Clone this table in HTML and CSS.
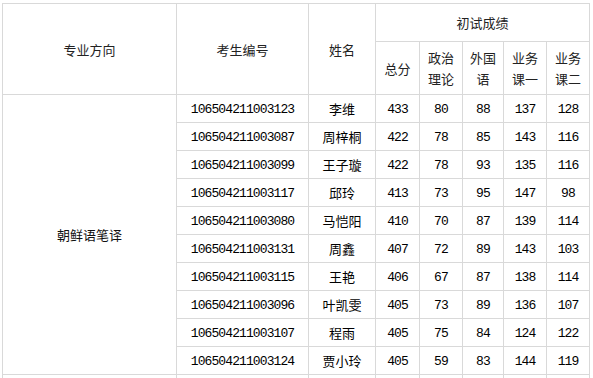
FILE: index.html
```html
<!DOCTYPE html>
<html lang="zh-CN">
<head>
<meta charset="utf-8">
<link rel="stylesheet" href="styles.css">
</head>
<body>
<div class="sheet">
  <div class="cell head span-r2">专业方向</div>
  <div class="cell head span-r2">考生编号</div>
  <div class="cell head span-r2">姓名</div>
  <div class="cell head span-c5">初试成绩</div>
  <div class="cell head">总分</div>
  <div class="cell head two">政治<br>理论</div>
  <div class="cell head two">外国<br>语</div>
  <div class="cell head two">业务<br>课一</div>
  <div class="cell head two">业务<br>课二</div>

  <div class="cell major span-r10">朝鲜语笔译</div>
  <div class="cell num">106504211003123</div><div class="cell name">李维</div><div class="cell num">433</div><div class="cell num">80</div><div class="cell num">88</div><div class="cell num">137</div><div class="cell num">128</div>
  <div class="cell num">106504211003087</div><div class="cell name">周梓桐</div><div class="cell num">422</div><div class="cell num">78</div><div class="cell num">85</div><div class="cell num">143</div><div class="cell num">116</div>
  <div class="cell num">106504211003099</div><div class="cell name">王子璇</div><div class="cell num">422</div><div class="cell num">78</div><div class="cell num">93</div><div class="cell num">135</div><div class="cell num">116</div>
  <div class="cell num">106504211003117</div><div class="cell name">邱玲</div><div class="cell num">413</div><div class="cell num">73</div><div class="cell num">95</div><div class="cell num">147</div><div class="cell num">98</div>
  <div class="cell num">106504211003080</div><div class="cell name">马恺阳</div><div class="cell num">410</div><div class="cell num">70</div><div class="cell num">87</div><div class="cell num">139</div><div class="cell num">114</div>
  <div class="cell num">106504211003131</div><div class="cell name">周鑫</div><div class="cell num">407</div><div class="cell num">72</div><div class="cell num">89</div><div class="cell num">143</div><div class="cell num">103</div>
  <div class="cell num">106504211003115</div><div class="cell name">王艳</div><div class="cell num">406</div><div class="cell num">67</div><div class="cell num">87</div><div class="cell num">138</div><div class="cell num">114</div>
  <div class="cell num">106504211003096</div><div class="cell name">叶凯雯</div><div class="cell num">405</div><div class="cell num">73</div><div class="cell num">89</div><div class="cell num">136</div><div class="cell num">107</div>
  <div class="cell num">106504211003107</div><div class="cell name">程雨</div><div class="cell num">405</div><div class="cell num">75</div><div class="cell num">84</div><div class="cell num">124</div><div class="cell num">122</div>
  <div class="cell num">106504211003124</div><div class="cell name">贾小玲</div><div class="cell num">405</div><div class="cell num">59</div><div class="cell num">83</div><div class="cell num">144</div><div class="cell num">119</div>

  <div class="cell"></div><div class="cell"></div><div class="cell"></div><div class="cell"></div><div class="cell"></div><div class="cell"></div><div class="cell"></div><div class="cell"></div>
</div>
</body>
</html>
```
FILE: styles.css
```css
html, body {
  margin: 0;
  padding: 0;
  background: #fff;
}
body {
  padding: 3px 0 0 2px;
}
.sheet {
  display: grid;
  grid-template-columns: 173px 131px 66px 43px 42px 40px 42px 42px;
  grid-template-rows: 37px 52px repeat(10, 27px) 3px;
  gap: 1px;
  padding: 1px 1px 0 1px;
  background: #d9d9d9;
  width: max-content;
}
.cell {
  background: #fff;
  display: flex;
  align-items: center;
  justify-content: center;
  text-align: center;
  font-family: "Noto Sans CJK SC", "Noto Sans", sans-serif;
  font-size: 13px;
  color: #111;
  line-height: 21px;
  overflow: hidden;
}
.head {
  color: #222;
}
.two {
  line-height: 21px;
}
.span-r2 {
  grid-row: span 2;
}
.span-c5 {
  grid-column: span 5;
}
.span-r10 {
  grid-row: span 10;
}
.num {
  font-family: "Liberation Mono", "DejaVu Sans Mono", monospace;
  font-size: 13px;
  letter-spacing: -0.9px;
  color: #000;
  padding-top: 1px;
}
.name {
  color: #000;
}
.major {
  color: #111;
}
```
